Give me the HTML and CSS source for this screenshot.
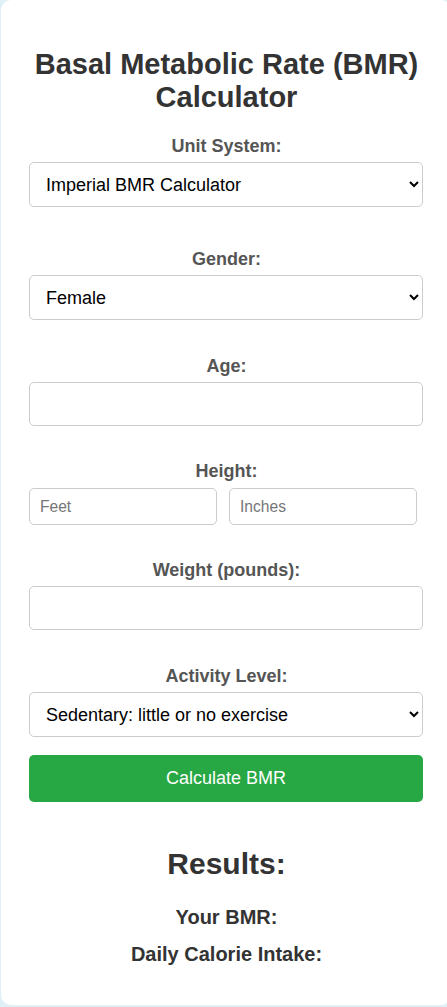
FILE: index.html
```html
<!DOCTYPE html>
<html lang="en">
<head>
<meta charset="UTF-8">
<title>BMR Calculator</title>
<link rel="stylesheet" href="styles.css">
</head>
<body>
<div class="card">
  <h1 class="title">Basal Metabolic Rate (BMR) Calculator</h1>

  <div class="field field--unit">
    <label class="label" for="unit">Unit System:</label>
    <select id="unit" class="control control--select">
      <option>Imperial BMR Calculator</option>
      <option>Metric BMR Calculator</option>
    </select>
  </div>

  <div class="field">
    <label class="label" for="gender">Gender:</label>
    <select id="gender" class="control control--select">
      <option>Female</option>
      <option>Male</option>
    </select>
  </div>

  <div class="field field--tight">
    <label class="label" for="age">Age:</label>
    <input id="age" class="control control--input" type="number">
  </div>

  <div class="field field--tight">
    <label class="label label--height" for="feet">Height:</label>
    <div class="height-row">
      <input id="feet" class="control control--small" type="number" placeholder="Feet">
      <input id="inches" class="control control--small" type="number" placeholder="Inches">
    </div>
  </div>

  <div class="field">
    <label class="label" for="weight">Weight (pounds):</label>
    <input id="weight" class="control control--input" type="number">
  </div>

  <div class="field field--last">
    <label class="label" for="activity">Activity Level:</label>
    <select id="activity" class="control control--select">
      <option>Sedentary: little or no exercise</option>
      <option>Lightly active</option>
    </select>
  </div>

  <button class="btn" type="button">Calculate BMR</button>

  <div class="results">
    <h2 class="results-title">Results:</h2>
    <h3 class="result-line">Your BMR:</h3>
    <h3 class="result-line">Daily Calorie Intake:</h3>
  </div>
</div>
</body>
</html>
```

FILE: styles.css
```css
* {
  box-sizing: border-box;
}

html, body {
  margin: 0;
  padding: 0;
}

body {
  background: #dff1f6;
  font-family: "Liberation Sans", Arial, sans-serif;
  color: #333;
  overflow: hidden;
}

.card {
  margin-left: 1px;
  width: 450px;
  background: #ffffff;
  border-radius: 10px;
  padding: 48px 27px 39px 28px;
}

.title {
  margin: 0 0 22px;
  font-size: 29px;
  line-height: 33px;
  font-weight: bold;
  text-align: center;
  color: #333;
}

.field {
  margin-bottom: 36px;
}

.field--unit {
  margin-bottom: 42px;
}

.field--tight {
  margin-bottom: 35px;
}

.field--last {
  margin-bottom: 18px;
}

.label {
  display: block;
  text-align: center;
  font-size: 18px;
  line-height: 20px;
  font-weight: bold;
  color: #555;
  margin-bottom: 6px;
}

.label--height {
  margin-bottom: 7px;
}

.control {
  display: block;
  width: 394px;
  border: 1px solid #ccc;
  border-radius: 5px;
  background: #fff;
  font-family: "Liberation Sans", Arial, sans-serif;
  color: #000;
}

.control--select {
  height: 45px;
  padding: 0 8px 0 12px;
  font-size: 18px;
}

.control--input {
  height: 44px;
  padding: 0 12px;
  font-size: 18px;
}

.height-row {
  display: flex;
  gap: 12px;
}

.control--small {
  width: 188px;
  height: 37px;
  padding: 0 10px;
  font-size: 15.6px;
}

.control--small::placeholder {
  color: #757575;
}

.btn {
  display: block;
  width: 394px;
  height: 47px;
  border: none;
  border-radius: 5px;
  background: #28a745;
  color: #fff;
  font-family: "Liberation Sans", Arial, sans-serif;
  font-size: 18px;
}

.results {
  margin-top: 44px;
  text-align: center;
}

.results-title {
  margin: 0 0 25px;
  font-size: 30px;
  line-height: 35px;
  font-weight: bold;
  color: #333;
}

.result-line {
  margin: 0 0 14px;
  font-size: 20px;
  line-height: 23px;
  font-weight: bold;
  color: #333;
}

.result-line:last-child {
  margin-bottom: 0;
}
```
